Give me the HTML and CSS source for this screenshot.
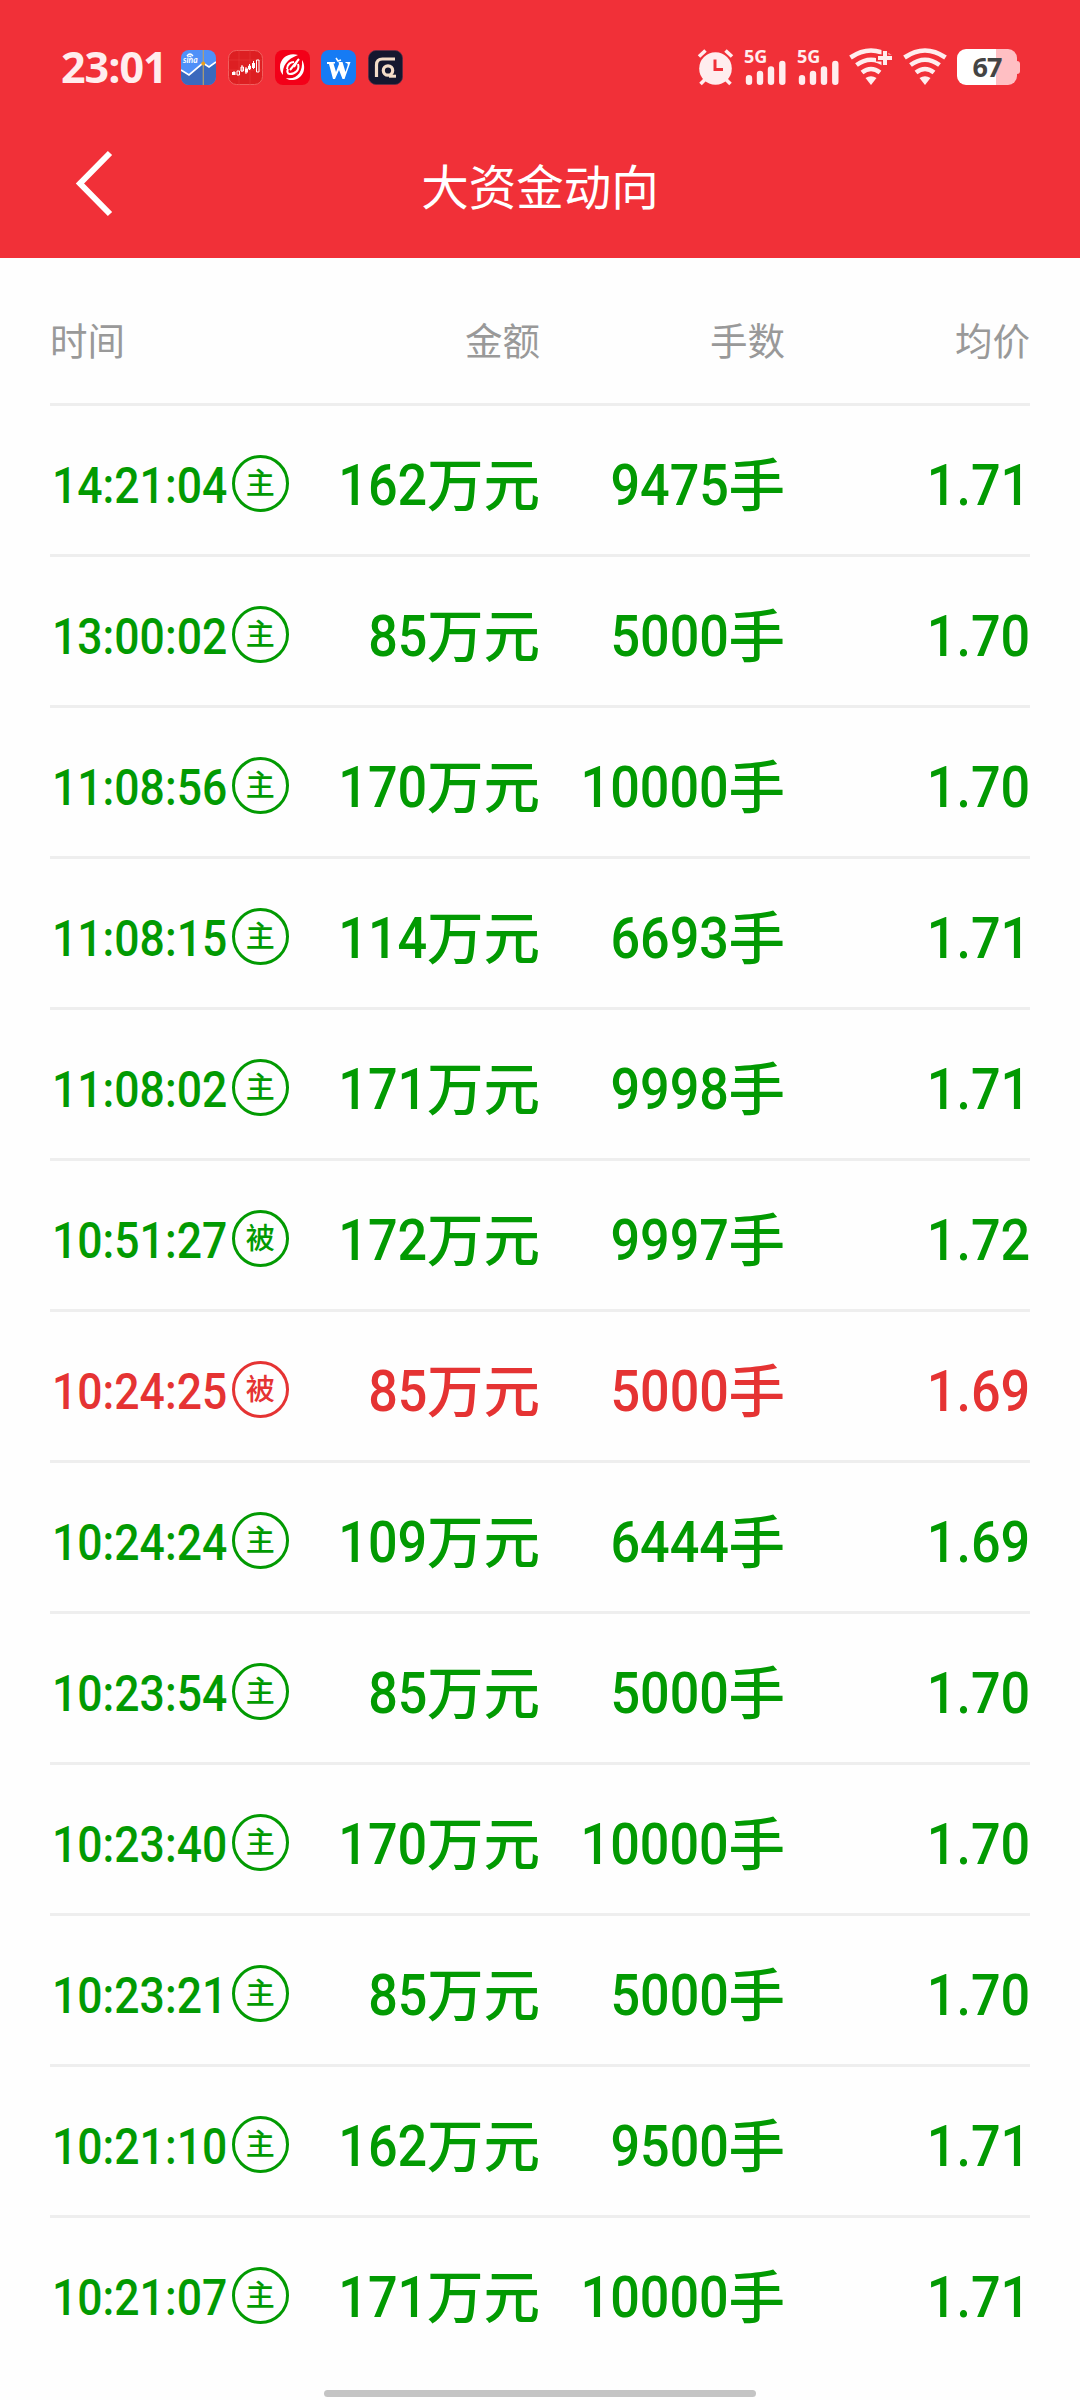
FILE: index.html
```html
<!DOCTYPE html>
<html lang="zh-CN">
<head>
    <meta charset="UTF-8">
    <meta name="viewport" content="width=device-width, initial-scale=1.0">
    <title>大资金动向</title>
    <link rel="stylesheet" href="styles.css">
</head>
<body>
    <header class="header">
        <div class="status-bar">
            <div class="clock">23:01</div>
            <div class="app-icons">
                <svg class="app-icon" viewBox="0 0 35 35">
                    <rect width="35" height="35" rx="8" fill="#4f90f8"/>
                    <path d="M0 20L8 25L22 13L28 17L35 12V27a8 8 0 0 1-8 8H8a8 8 0 0 1-8-8Z" fill="#3b69bd"/>
                    <path d="M0 20L8 25L22 13L28 17L35 12" fill="none" stroke="#fff" stroke-width="1.7"/>
                    <path d="M22.3 0V35" stroke="#b3a070" stroke-width="1.2"/>
                    <circle cx="22.3" cy="13.5" r="2" fill="#e8a020"/>
                    <path d="M6 6q3-4 6 0M8 6.500q2-1 2 1" fill="none" stroke="#fff" stroke-width="1.3"/>
                    <text x="2" y="12.500" class="sina">sina</text>
                </svg>
                <svg class="app-icon" viewBox="0 0 35 35">
                    <rect x=".5" y=".5" width="34" height="34" rx="8" fill="#dd1f22" stroke="#f0605f"/>
                    <path d="M0 10H35M0 20H35M11 0V35M22 0V35" stroke="#e8393b" stroke-width=".6"/>
                    <path d="M6 21V25M14 15V22M18 17V24M21.500 14V20M25.500 11V19" stroke="#fff" stroke-width="1"/>
                    <path d="M4 22h3.500v3H4zM17 18.500h3v4h-3zM24 13h3v5h-3z" fill="#fff"/>
                    <path d="M9 21h2.500v4H9zM13 17h2.500v4H13zM20.500 16h2v3h-2zM28.500 10h2.500v12h-2.500z" fill="none" stroke="#fff" stroke-width="1"/>
                </svg>
                <svg class="app-icon" viewBox="0 0 35 35">
                    <rect width="35" height="35" rx="8" fill="#f30018"/>
                    <path d="M23 5C14 2 5 8 5 17c0 3 1 6 3 8C7 16 12 9 23 5Z" fill="#fff"/>
                    <path d="M27 10c5 8 1 19-9 20-3 .3-6-.5-7-2 11 2 17-6 16-18Z" fill="#fff"/>
                    <path d="M24 9L15 20M12 19c0-5 4-7 7-7M23 14c2 6-3 10-8 10-3 0-3-3-2-5M19 17l4-7" fill="none" stroke="#fff" stroke-width="2"/>
                </svg>
                <svg class="app-icon" viewBox="0 0 35 35">
                    <rect width="35" height="35" rx="8" fill="#167bf4"/>
                    <path d="M6 12h8v1.500h-1.500L15 22l3-8-.5-2h4l3 10 2-6c1-3-1-3-2-3V12h5l-6 17h-2l-3.500-9-4 9h-2L8 14H6Z" fill="#fff"/>
                    <path d="M15 8l2 3 3-1" fill="none" stroke="#fff" stroke-width="1.5"/>
                </svg>
                <svg class="app-icon" viewBox="0 0 35 35">
                    <rect x=".4" y=".4" width="34.200" height="34.200" rx="8" fill="#15172f" stroke="#5c3049" stroke-width=".8"/>
                    <path d="M8.500 27V15q0-6 6-6H27" fill="none" stroke="#f3dcc8" stroke-width="3.2"/>
                    <circle cx="20" cy="20.500" r="4.700" fill="none" stroke="#f3dcc8" stroke-width="3.2"/>
                    <path d="M21 26.200h7" stroke="#f3dcc8" stroke-width="3"/>
                </svg>
            </div>
            <div class="system-icons">
                <svg class="alarm" width="37" height="38" viewBox="0 0 37 38">
                    <circle cx="18.500" cy="20.500" r="16.300" fill="#ffedee"/>
                    <path d="M2 8.500L8.500 2.500M35 8.500L28.500 2.500M3.500 36L8 31.500M33.500 36L29 31.500" stroke="#ffedee" stroke-width="3.600"/>
                    <path d="M18 11.500V21.500H26" fill="none" stroke="#f03038" stroke-width="3"/>
                </svg>
                <svg class="signal" width="43" height="38" viewBox="0 0 43 38">
                    <text x="0" y="14.700" class="network">5G</text>
                    <path d="M5 30.200V33.800M16 25.900V33.800M27 21.500V33.800M38.300 15.900V33.800" stroke="#ffedee" stroke-width="6.400" stroke-linecap="round"/>
                </svg>
                <svg class="signal" width="43" height="38" viewBox="0 0 43 38">
                    <text x="0" y="14.700" class="network">5G</text>
                    <path d="M5 30.200V33.800M16 25.900V33.800M27 21.500V33.800M38.300 15.900V33.800" stroke="#ffedee" stroke-width="6.400" stroke-linecap="round"/>
                </svg>
                <svg class="wifi" width="45" height="38" viewBox="0 0 45 38">
                    <path d="M1.500 9.500Q22 -4.500 42.500 9.500M7.500 17Q22 6.500 36.500 17M13 24.500Q22 17.500 31 24.500" fill="none" stroke="#ffedee" stroke-width="4.600"/>
                    <path d="M16.500 30Q22 26.500 27.500 30L22 37Z" fill="#ffedee"/>
                    <path d="M36 1V19M27 10H45" stroke="#f03038" stroke-width="7"/>
                    <path d="M36 3V17M29 10H43" stroke="#ffedee" stroke-width="4"/>
                </svg>
                <svg class="wifi" width="45" height="38" viewBox="0 0 45 38">
                    <path d="M1.500 9.500Q22 -4.500 42.500 9.500M7.500 17Q22 6.500 36.500 17M13 24.500Q22 17.500 31 24.500" fill="none" stroke="#ffedee" stroke-width="4.600"/>
                    <path d="M16.500 30Q22 26.500 27.500 30L22 37Z" fill="#ffedee"/>
                </svg>
                <div class="battery"><span>67</span></div>
            </div>
        </div>
        <nav class="nav">
            <svg class="back" width="42" height="68" viewBox="0 0 42 68">
                <path d="M38 3L8 33.500L38 64" fill="none" stroke="#fff" stroke-width="6"/>
            </svg>
            <h1>大资金动向</h1>
        </nav>
    </header>

    <main class="list">
        <div class="row head">
            <div>时间</div><div>金额</div><div>手数</div><div>均价</div>
        </div>
        <div class="row">
            <div class="time"><span>14:21:04</span><i>主</i></div><div class="num"><span>162</span><b>万元</b></div><div class="num"><span>9475</span><b>手</b></div><div class="num"><span>1.71</span></div>
        </div>
        <div class="row">
            <div class="time"><span>13:00:02</span><i>主</i></div><div class="num"><span>85</span><b>万元</b></div><div class="num"><span>5000</span><b>手</b></div><div class="num"><span>1.70</span></div>
        </div>
        <div class="row">
            <div class="time"><span>11:08:56</span><i>主</i></div><div class="num"><span>170</span><b>万元</b></div><div class="num"><span>10000</span><b>手</b></div><div class="num"><span>1.70</span></div>
        </div>
        <div class="row">
            <div class="time"><span>11:08:15</span><i>主</i></div><div class="num"><span>114</span><b>万元</b></div><div class="num"><span>6693</span><b>手</b></div><div class="num"><span>1.71</span></div>
        </div>
        <div class="row">
            <div class="time"><span>11:08:02</span><i>主</i></div><div class="num"><span>171</span><b>万元</b></div><div class="num"><span>9998</span><b>手</b></div><div class="num"><span>1.71</span></div>
        </div>
        <div class="row">
            <div class="time"><span>10:51:27</span><i>被</i></div><div class="num"><span>172</span><b>万元</b></div><div class="num"><span>9997</span><b>手</b></div><div class="num"><span>1.72</span></div>
        </div>
        <div class="row up">
            <div class="time"><span>10:24:25</span><i>被</i></div><div class="num"><span>85</span><b>万元</b></div><div class="num"><span>5000</span><b>手</b></div><div class="num"><span>1.69</span></div>
        </div>
        <div class="row">
            <div class="time"><span>10:24:24</span><i>主</i></div><div class="num"><span>109</span><b>万元</b></div><div class="num"><span>6444</span><b>手</b></div><div class="num"><span>1.69</span></div>
        </div>
        <div class="row">
            <div class="time"><span>10:23:54</span><i>主</i></div><div class="num"><span>85</span><b>万元</b></div><div class="num"><span>5000</span><b>手</b></div><div class="num"><span>1.70</span></div>
        </div>
        <div class="row">
            <div class="time"><span>10:23:40</span><i>主</i></div><div class="num"><span>170</span><b>万元</b></div><div class="num"><span>10000</span><b>手</b></div><div class="num"><span>1.70</span></div>
        </div>
        <div class="row">
            <div class="time"><span>10:23:21</span><i>主</i></div><div class="num"><span>85</span><b>万元</b></div><div class="num"><span>5000</span><b>手</b></div><div class="num"><span>1.70</span></div>
        </div>
        <div class="row">
            <div class="time"><span>10:21:10</span><i>主</i></div><div class="num"><span>162</span><b>万元</b></div><div class="num"><span>9500</span><b>手</b></div><div class="num"><span>1.71</span></div>
        </div>
        <div class="row last">
            <div class="time"><span>10:21:07</span><i>主</i></div><div class="num"><span>171</span><b>万元</b></div><div class="num"><span>10000</span><b>手</b></div><div class="num"><span>1.71</span></div>
        </div>
    </main>
    <div class="home-bar"></div>
</body>
</html>
```
FILE: styles.css
```css
* {
    box-sizing: border-box;
}
body {
    margin: 0;
    height: 2400px;
    overflow: hidden;
    display: flex;
    flex-direction: column;
    background: #fefefe;
    font-family: 'Noto Sans CJK SC', sans-serif;
}
.header {
    height: 258px;
    background: #f13038;
    color: #fff;
}
.status-bar {
    height: 134px;
    padding: 0 63px 0 61px;
    display: flex;
    align-items: center;
}
.clock {
    width: 120px;
    font: 700 43px/50px 'Open Sans', sans-serif;
    letter-spacing: -1px;
    color: #ffedee;
}
.app-icons {
    display: flex;
    gap: 11.8px;
}
.app-icon {
    width: 35px;
    height: 35px;
}
.sina {
    font: italic 700 8.5px Lato, sans-serif;
    fill: #fff;
}
.system-icons {
    margin-left: auto;
    display: flex;
    align-items: center;
}
.signal {
    margin-left: 10px;
    overflow: visible;
}
.network {
    font: 700 18px 'Open Sans', sans-serif;
    fill: #ffedee;
}
.wifi {
    margin-left: 9px;
}
.battery {
    width: 60px;
    height: 36px;
    margin-left: 9px;
    border-radius: 9px;
    position: relative;
    background: linear-gradient(90deg, #fff 39px, #ffbfc3 39px);
    color: #444;
    font: 700 27px/36px 'Open Sans', sans-serif;
    letter-spacing: -1px;
    text-align: center;
}
.battery::after {
    content: '';
    position: absolute;
    left: 60px;
    top: 12px;
    width: 3px;
    height: 13px;
    border-radius: 0 3px 3px 0;
    background: #ffbfc3;
}
.nav {
    height: 100px;
    padding: 0 72px;
    display: grid;
    grid-template-columns: 42px 1fr 42px;
    align-items: center;
}
.nav h1 {
    margin: 2px 0 0;
    font-size: 47.5px;
    line-height: 60px;
    font-weight: 400;
    text-align: center;
}
.list {
    padding: 0 50px;
}
.row {
    height: 151px;
    display: grid;
    grid-template-columns: repeat(4, 1fr);
    align-items: center;
    text-align: right;
    white-space: nowrap;
    color: #029a02;
    border-bottom: 3px solid #eee;
}
.row.last {
    border-bottom-color: transparent;
}
.row.up {
    color: #e53333;
}
.row.head {
    height: 148px;
    padding-top: 15px;
    color: #999;
    font-size: 37.5px;
}
.head div:first-child {
    text-align: left;
}
.time {
    display: flex;
    align-items: center;
    font: 500 50px/60px Roboto, sans-serif;
    padding: 8px 0 0 2px;
}
/* digits are narrowed to a DIN-like width */
.time span {
    padding-top: 4px;
    margin-right: -20px;
    transform: scaleX(0.89);
    transform-origin: left;
}
.time i {
    width: 57px;
    height: 57px;
    margin: -1px 0 0 3px;
    border: 3px solid;
    border-radius: 50%;
    font: 500 29px/46px 'Noto Sans CJK SC', sans-serif;
    text-align: center;
}
.num {
    display: flex;
    justify-content: flex-end;
    align-items: center;
    font: 500 57.6px/70px Roboto, sans-serif;
}
.num span {
    padding-top: 11px;
    transform: scaleX(0.905);
    transform-origin: right;
}
.num b {
    font: 500 56.5px/70px 'Noto Sans CJK SC', sans-serif;
    padding-top: 1px;
}
.home-bar {
    width: 432px;
    height: 7px;
    margin: auto auto 3px;
    border-radius: 4px;
    background: #c4c4c4;
}
```
